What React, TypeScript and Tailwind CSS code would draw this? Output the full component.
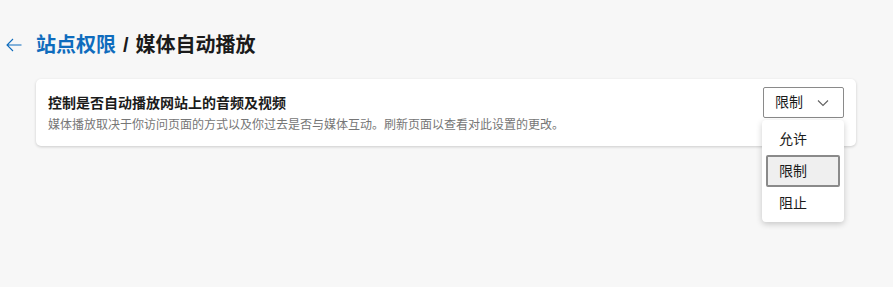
import React from 'react';

const font = { fontFamily: '"Liberation Sans", "Noto Sans CJK SC", sans-serif' };

const options = ['允许', '限制', '阻止'];

const App: React.FC = () => {
  const selected = '限制';

  return (
    <div className="w-[893px] h-[287px] bg-[#f7f7f7] overflow-hidden" style={font}>
      {/* 标题栏 */}
      <div className="flex items-center h-[24px] mt-[33px]">
        <button className="w-[36px] flex items-center pl-[6px] text-[#0f6cbd]">
          <svg width="16" height="16" viewBox="0 0 16 16" fill="none" stroke="currentColor" strokeWidth="1.1">
            <path d="M15.5 8H1M7 2L1 8l6 6" />
          </svg>
        </button>
        <h1 className="text-[20px] leading-[24px] font-bold text-[#1b1b1b] flex items-center">
          <span className="text-[#0f6cbd]">站点权限</span>
          <span className="mx-[7px]">/</span>
          <span>媒体自动播放</span>
        </h1>
      </div>

      {/* 设置卡片 */}
      <div className="ml-[36px] mt-[22px] w-[820px] bg-white rounded-[5px] shadow-[0_1px_3px_rgba(0,0,0,0.18)] flex justify-between pl-[12px] pr-[12px] pt-[8px] pb-[11px]">
        <div className="pt-[6px]">
          <div className="text-[14px] leading-[20px] font-semibold text-[#1b1b1b]">
            控制是否自动播放网站上的音频及视频
          </div>
          <div className="text-[12px] leading-[20px] text-[#767676] mt-[2px]">
            媒体播放取决于你访问页面的方式以及你过去是否与媒体互动。刷新页面以查看对此设置的更改。
          </div>
        </div>

        <div className="relative">
          <div className="w-[81px] h-[31px] border border-[#8a8a8a] rounded-[2px] bg-white flex items-center justify-between pl-[11px] pr-[14px] text-[14px] text-[#1b1b1b]">
            <span>{selected}</span>
            <svg width="12" height="8" viewBox="0 0 12 8" fill="none" stroke="#616161" strokeWidth="1.1">
              <path d="M1 1.5l5 5 5-5" />
            </svg>
          </div>

          {/* 下拉菜单 */}
          <div className="absolute left-[-1px] top-[33px] w-[82px] bg-white rounded-[4px] shadow-[0_2px_6px_rgba(0,0,0,0.2)] py-[3px]">
            {options.map((opt) => (
              <div
                key={opt}
                className={
                  opt === selected
                    ? 'mx-[4px] h-[32px] flex items-center pl-[11px] text-[14px] text-[#1b1b1b] bg-[#efefef] border-2 border-[#8a8a8a] rounded-[2px]'
                    : 'mx-[4px] h-[32px] flex items-center pl-[13px] text-[14px] text-[#1b1b1b]'
                }
              >
                {opt}
              </div>
            ))}
          </div>
        </div>
      </div>
    </div>
  );
};

export default App;
